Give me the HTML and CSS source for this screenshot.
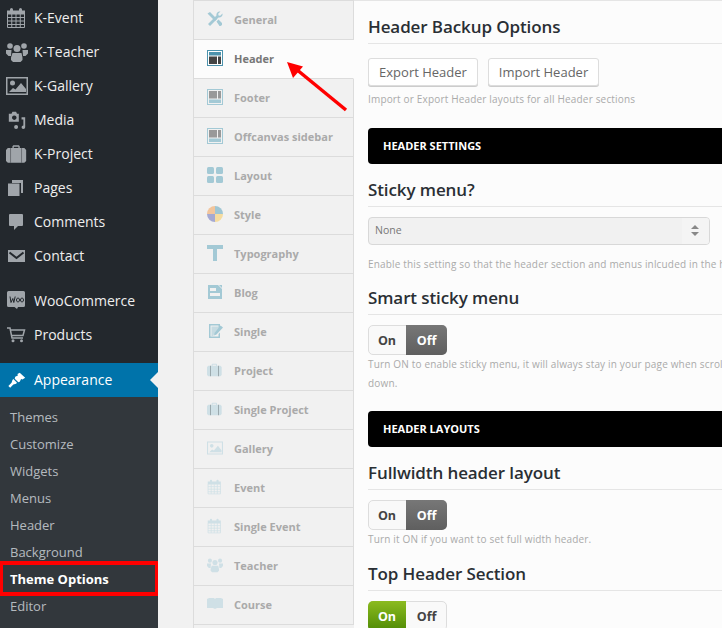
FILE: index.html
```html
<!DOCTYPE html>
<html lang="en">
<head>
<meta charset="utf-8">
<title>Theme Options</title>
<link rel="stylesheet" href="styles.css">
</head>
<body>
<svg class="defs" width="0" height="0" aria-hidden="true">
  <symbol id="i-cal" viewBox="0 0 22 20"><path d="M1 2.500h3V1.500a1.500 1.500 0 0 1 3 0v1h6v-1a1.500 1.500 0 0 1 3 0v1h3V6.500H1z"/><path d="M1.500 6v13.500h17V6M5.750 6v13.500M10 6v13.500M14.250 6v13.500M1.500 9.500h17M1.500 13h17M1.500 16.500h17" fill="none" stroke="currentColor" stroke-width="1"/></symbol>
  <symbol id="i-team" viewBox="0 0 22 20"><circle cx="4" cy="4" r="2.800"/><circle cx="18" cy="4" r="2.800"/><circle cx="11" cy="6.500" r="3.500"/><path d="M0 8h5.500L5 14H2.500L0 11.500zM22 8h-5.500l.5 6h2.500l2.500-2.500zM6.500 11h9l1 4.500V18l-2 2h-7.500l-2-2v-2.500z"/></symbol>
  <symbol id="i-img" viewBox="0 0 22 18"><path fill-rule="evenodd" d="M0 0h22v18H0zm1.500 1.500v15h19v-15z"/><circle cx="6.500" cy="6" r="2.500"/><path d="M3 15l4-4 2.500 1.500L15 6l5 6v3z"/></symbol>
  <symbol id="i-media" viewBox="-2 -1 24 22"><path fill-rule="evenodd" d="M1 3h3l1-2h4l1 2h2v9H1zm6 2a2.500 2.500 0 1 0 .01 0z"/><path d="M13 7h6v11a2 2 0 1 1-2-2V9.500h-2V7zM9 15.500a2.200 2.200 0 1 1 0 4.400 2.200 2.200 0 0 1 0-4.400z"/></symbol>
  <symbol id="i-case" viewBox="0 -.5 24 20"><path fill-rule="evenodd" d="M7 3V1l1-1h6l1 1v2h5l2 2v12l-2 2H2l-2-2V5l2-2zm1.500 0h5V1.500h-5z"/><path d="M4.500 3h1v16h-1zM16.500 3h1v16h-1z" fill="#23282d" opacity=".45"/></symbol>
  <symbol id="i-pages" viewBox="0 0 22 20"><path d="M6 2h11v13h-2V5H6z"/><path d="M2 5.500h11.500V18H2z"/></symbol>
  <symbol id="i-bubble" viewBox="0 0 22 20"><path d="M3 3a1 1 0 0 1 1-1h12a1 1 0 0 1 1 1v10a1 1 0 0 1-1 1h-4l-4 4v-4H4a1 1 0 0 1-1-1z"/></symbol>
  <symbol id="i-mail" viewBox="0 0 22 20"><path d="M2 4h17v12H2z"/><path d="M3.500 6.500l7 5.500 7-5.500" fill="none" stroke="#23282d" stroke-width="2"/></symbol>
  <symbol id="i-woo" viewBox="0 0 22 20"><path d="M2.500 0h15A1.500 1.500 0 0 1 19 1.500v13a1.500 1.500 0 0 1-1.500 1.500H12l-1 2-2.500-2h-6A1.500 1.500 0 0 1 1 14.500v-13A1.500 1.500 0 0 1 2.500 0z"/><path d="M4 5.500l1 6 1.800-4 1 4 1.400-6M12 7a1.500 2 0 1 0 .01 0zM16 7a1.500 2 0 1 0 .01 0z" fill="none" stroke="#23282d" stroke-width="1"/></symbol>
  <symbol id="i-cart" viewBox="0 0 22 20"><path d="M1 3h3l2 10h11M4.500 5h14l-1.500 5.500H5.500" fill="none" stroke="currentColor" stroke-width="1.500"/><circle cx="7" cy="15.700" r="1.500"/><circle cx="15.500" cy="15.700" r="1.500"/></symbol>
  <symbol id="i-brush" viewBox="-1 -1 22 22"><path d="M13 2l6 5.500-3 2-1.500-.5-1.500 3-1.500.5-4-4 .5-2 3-1.500-.5-1.500zM6 9l4 4-1 1-3 1-3.500 3.500-2-2L4 13l1-3z"/></symbol>
  <symbol id="i-tools" viewBox="0 0 16 16"><path d="M.5 2.500L3 1l7 7-2 2zM9.500 10.500l2-2 3.500 3.500v2l-1.500 1h-1z"/><path d="M15.500 2.500l-2.300 2.300-1.600-.4-.4-1.600L13.500.500c-2.500-.6-4.500 1.500-4 4L1 13l2 2 8.500-8.500c2.500.5 4.500-1.500 4-4z"/></symbol>
  <symbol id="i-header" viewBox="0 0 16 16"><path d="M0 0h16v16H0z" fill="currentColor"/><path d="M1 1h14v14H1z" fill="#fff"/><path d="M2 2h12v3.500H2z" fill="currentColor"/><path d="M2 6.500h8V14H2zM11 6.500h3V14h-3z" fill="#444"/></symbol>
  <symbol id="i-footer" viewBox="0 0 16 16"><path d="M0 0h16v16H0z" fill="currentColor"/><path d="M1 1h14v14H1z" fill="#f1f1f1"/><path d="M2 10.500h12V14H2z" fill="currentColor"/><path d="M2 2h8v7.500H2zM11 2h3v7.500h-3z" fill="#999"/></symbol>
  <symbol id="i-grid" viewBox="0 0 16 16"><rect x="0" y="0" width="7" height="7" rx="1.500"/><rect x="9" y="0" width="7" height="7" rx="1.500"/><rect x="0" y="9" width="7" height="7" rx="1.500"/><rect x="9" y="9" width="7" height="7" rx="1.500"/></symbol>
  <symbol id="i-style" viewBox="0 0 16 16"><path d="M8 8V0a8 8 0 0 1 8 8z" fill="#9fc6d3"/><path d="M8 8h8a8 8 0 0 1-8 8z" fill="#f5dc9f"/><path d="M8 8v8a8 8 0 0 1-8-8z" fill="#a5a9d2"/><path d="M8 8H0a8 8 0 0 1 8-8z" fill="#f2c59c"/></symbol>
  <symbol id="i-t" viewBox="0 0 16 16"><path d="M0 0h16v4h-6v12H6V4H0z"/></symbol>
  <symbol id="i-blog" viewBox="0 0 16 16"><path fill-rule="evenodd" d="M1 1h14v14H1zm2 3v3h6V4zm0 5v3h10V9z"/><path d="M11 .500l4.500 4.500" stroke="#f1f1f1" stroke-width="1" fill="none"/></symbol>
  <symbol id="i-single" viewBox="0 0 16 16"><path fill-rule="evenodd" d="M2 1h11v4l-1.500 1.500V2.500h-8v11h8V11l1.500-1.500V15H2z"/><path d="M4.500 3.500h7v3.500L8 10.500 6.500 12v1H4.500z" opacity=".55"/><path d="M13.500 2.500L16 4.500 9.500 11.500 7 12.500l.5-2.500z"/></symbol>
  <symbol id="i-book" viewBox="0 0 16 14"><path d="M0 2l2-1h5l1 1 1-1h5l2 1v9h-6l-2 1-2-1H0z"/></symbol>
</svg>

<div class="page">
  <nav class="adminmenu">
    <ul class="menu">
      <li class="item"><svg class="mi"><use href="#i-cal"/></svg>K-Event</li>
      <li class="item"><svg class="mi"><use href="#i-team"/></svg>K-Teacher</li>
      <li class="item"><svg class="mi"><use href="#i-img"/></svg>K-Gallery</li>
      <li class="item"><svg class="mi"><use href="#i-media"/></svg>Media</li>
      <li class="item"><svg class="mi"><use href="#i-case"/></svg>K-Project</li>
      <li class="item"><svg class="mi"><use href="#i-pages"/></svg>Pages</li>
      <li class="item"><svg class="mi"><use href="#i-bubble"/></svg>Comments</li>
      <li class="item"><svg class="mi"><use href="#i-mail"/></svg>Contact</li>
      <li class="item sep"><svg class="mi"><use href="#i-woo"/></svg>WooCommerce</li>
      <li class="item"><svg class="mi"><use href="#i-cart"/></svg>Products</li>
      <li class="item sep current"><svg class="mi"><use href="#i-brush"/></svg>Appearance</li>
    </ul>
    <ul class="submenu">
      <li>Themes</li>
      <li>Customize</li>
      <li>Widgets</li>
      <li>Menus</li>
      <li>Header</li>
      <li>Background</li>
      <li class="sub-current">Theme Options</li>
      <li>Editor</li>
    </ul>
  </nav>

  <div class="gutter"></div>

  <ul class="tabs">
    <li class="tab"><svg class="ti"><use href="#i-tools"/></svg>General</li>
    <li class="tab active"><svg class="ti ti-strong"><use href="#i-header"/></svg>Header</li>
    <li class="tab"><svg class="ti"><use href="#i-footer"/></svg>Footer</li>
    <li class="tab"><svg class="ti"><use href="#i-footer"/></svg>Offcanvas sidebar</li>
    <li class="tab"><svg class="ti"><use href="#i-grid"/></svg>Layout</li>
    <li class="tab"><svg class="ti"><use href="#i-style"/></svg>Style</li>
    <li class="tab"><svg class="ti"><use href="#i-t"/></svg>Typography</li>
    <li class="tab"><svg class="ti"><use href="#i-blog"/></svg>Blog</li>
    <li class="tab"><svg class="ti"><use href="#i-single"/></svg>Single</li>
    <li class="tab"><svg class="ti ti-faint"><use href="#i-case"/></svg>Project</li>
    <li class="tab"><svg class="ti ti-faint"><use href="#i-case"/></svg>Single Project</li>
    <li class="tab"><svg class="ti ti-faint"><use href="#i-img"/></svg>Gallery</li>
    <li class="tab"><svg class="ti ti-faint"><use href="#i-cal"/></svg>Event</li>
    <li class="tab"><svg class="ti ti-faint"><use href="#i-cal"/></svg>Single Event</li>
    <li class="tab"><svg class="ti ti-faint"><use href="#i-team"/></svg>Teacher</li>
    <li class="tab"><svg class="ti ti-faint"><use href="#i-book"/></svg>Course</li>
  </ul>

  <main class="panel">
    <section class="opt opt-first">
      <h3 class="opt-title">Header Backup Options</h3>
      <div class="btn-row">
        <button class="btn btn-export">Export Header</button>
        <button class="btn btn-import">Import Header</button>
      </div>
      <p class="desc">Import or Export Header layouts for all Header sections</p>
    </section>

    <div class="band band-a">HEADER SETTINGS</div>

    <section class="opt">
      <h3 class="opt-title">Sticky menu?</h3>
      <div class="select"><span class="select-value">None</span><span class="select-arrows"></span></div>
      <p class="desc desc-select">Enable this setting so that the header section and menus inlcuded in the header will always stay visible</p>
    </section>

    <section class="opt opt-smart">
      <h3 class="opt-title">Smart sticky menu</h3>
      <div class="toggle"><span class="t-on">On</span><span class="t-off selected-off">Off</span></div>
      <p class="desc desc-toggle">Turn ON to enable sticky menu, it will always stay in your page when scrolling<br>down.</p>
    </section>

    <div class="band band-b">HEADER LAYOUTS</div>

    <section class="opt">
      <h3 class="opt-title">Fullwidth header layout</h3>
      <div class="toggle"><span class="t-on">On</span><span class="t-off selected-off">Off</span></div>
      <p class="desc desc-toggle">Turn it ON if you want to set full width header.</p>
    </section>

    <section class="opt opt-top">
      <h3 class="opt-title">Top Header Section</h3>
      <div class="toggle"><span class="t-on selected-on">On</span><span class="t-off">Off</span></div>
    </section>
  </main>

  <svg class="arrow" width="70" height="56" viewBox="0 0 70 56" aria-hidden="true">
    <path d="M60 50L10 9" stroke="#f00" stroke-width="3.500" fill="none"/>
    <path d="M1 2L17 6.500 7 18z" fill="#f00"/>
  </svg>
</div>
</body>
</html>
```
FILE: styles.css
```css
* { box-sizing: border-box; }
html, body { margin: 0; padding: 0; height: 628px; overflow: hidden; }
body { background: #f1f1f1; font-family: "Open Sans", sans-serif; }
ul { list-style: none; margin: 0; padding: 0; }
.defs { position: absolute; }

.page { position: relative; display: flex; width: 722px; height: 628px; overflow: hidden; }

.adminmenu { flex: 0 0 158px; background: #23282d; padding-top: 1px; }
.item { display: flex; align-items: center; height: 34px; padding-bottom: 2px; font-size: 14px; color: #eee; position: relative; }
.item.sep { margin-top: 11px; }
.item.current { background: #0073aa; color: #fff; }
.item.current::after {
  content: ""; position: absolute; right: 0; top: 9px;
  border: 8px solid transparent; border-left-width: 0; border-right-color: #f1f1f1;
}
.mi { flex: 0 0 22px; width: 22px; height: 20px; margin: 2px 6px 0 6px; fill: #a0a5aa; color: #a0a5aa; }
.current .mi { fill: #fff; color: #fff; }

.submenu { background: #32373c; padding: 7px 0; font-size: 13px; color: rgba(240,245,250,.7); height: 231px; }
.submenu li { height: 27px; line-height: 27px; padding-left: 10px; position: relative; }
.submenu .sub-current { color: #fff; font-weight: 700; }
.sub-current::after {
  content: ""; position: absolute; left: 0; right: 0; top: -5px; bottom: -3px;
  border-style: solid; border-color: #f00; border-width: 4px 3px;
}

.gutter { flex: 0 0 35px; }

.tabs { flex: 0 0 161px; border-left: 1px solid #dcdcdc; border-top: 1px solid #dcdcdc; height: 628px; }
.tab {
  display: flex; align-items: center; height: 39px; padding-bottom: 2px; font-size: 11px; font-weight: 700; color: #aaa;
  background: #f1f1f1; border-bottom: 1px solid #dcdcdc; border-right: 1px solid #dcdcdc;
}
.tab.active { background: #fcfcfc; color: #777; border-right-color: #fcfcfc; }
.ti { flex: 0 0 16px; width: 16px; height: 16px; margin: 0 11px 0 13px; fill: #a3c9d5; color: #a3c9d5; }
.ti-strong { color: #4d93ad; }
.ti-faint { fill: #cfe0e6; color: #cfe0e6; }

.panel { flex: 0 0 368px; min-width: 0; background: #fcfcfc; border-top: 1px solid #e5e5e5; padding: 0 0 0 14px; white-space: nowrap; height: 628px; }
.opt-title {
  margin: 0; font-size: 17px; line-height: 24px; font-weight: 600; letter-spacing: -.1px; color: #2a2f34;
  padding-bottom: 4px; border-bottom: 1px solid #e5e5e5; width: 400px;
}
.opt-first { padding-top: 14px; }
.btn-row { display: flex; gap: 10px; margin-top: 14px; }
.btn {
  height: 28px; padding: 0; font: 13px/26px "Open Sans", sans-serif; color: #666; background: #fff;
  border: 1px solid #ddd; border-radius: 3px; box-shadow: 0 1px 0 #ccc;
}
.btn-export { width: 110px; }
.btn-import { width: 111px; }
.desc { margin: 0; font-size: 10px; line-height: 18px; color: #aaa; letter-spacing: .17px; }
.opt-first .desc { margin-top: 4px; }

.band {
  width: 400px; height: 36px; background: #000; color: #fff; border-radius: 4px 0 0 4px;
  font-size: 11px; font-weight: 700; line-height: 36px; padding-left: 15px;
}
.band-a { margin-top: 20px; }
.band-b { margin-top: 18px; }
.band + .opt { padding-top: 14px; }

.select {
  display: flex; justify-content: space-between; align-items: center; width: 342px; height: 28px; margin-top: 10px;
  background: #f1f1f1; border: 1px solid #d8d8d8; border-radius: 4px; font-size: 10.500px; color: #777; padding-left: 6px;
}
.select-value { margin-top: -2px; }
.select-arrows { position: relative; width: 27px; height: 26px; background: #f4f4f4; border-radius: 0 3px 3px 0; }
.select-arrows::before, .select-arrows::after {
  content: ""; position: absolute; left: 9px; border: 4px solid transparent;
}
.select-arrows::before { top: 7px; border-bottom-color: #888; border-top-width: 0; }
.select-arrows::after { top: 14px; border-top-color: #888; border-bottom-width: 0; }
.desc-select { margin-top: 10px; }
.opt-smart { margin-top: 13px; }
.opt-top { margin-top: 13px; }

.toggle {
  display: flex; width: 79px; height: 30px; margin-top: 10px; font-size: 12.500px; font-weight: 700; text-align: center;
  color: #444; background: #f9f9f9; border: 1px solid #ddd; border-radius: 5px;
}
.t-on { flex: 0 0 38px; margin: -1px 0 -1px -1px; border-radius: 5px 0 0 5px; line-height: 28px; padding-top: 2px; }
.t-off { flex: 1; margin: -1px -1px -1px 0; border-radius: 0 5px 5px 0; line-height: 28px; padding-top: 2px; }
.selected-off { color: #fff; background: linear-gradient(#777, #5f5f5f); }
.selected-on { color: #fff; background: linear-gradient(#8bbb1f, #4f8a05); }
.desc-toggle { margin-top: 0; line-height: 19px; }

.arrow { position: absolute; left: 286px; top: 60px; }
```
